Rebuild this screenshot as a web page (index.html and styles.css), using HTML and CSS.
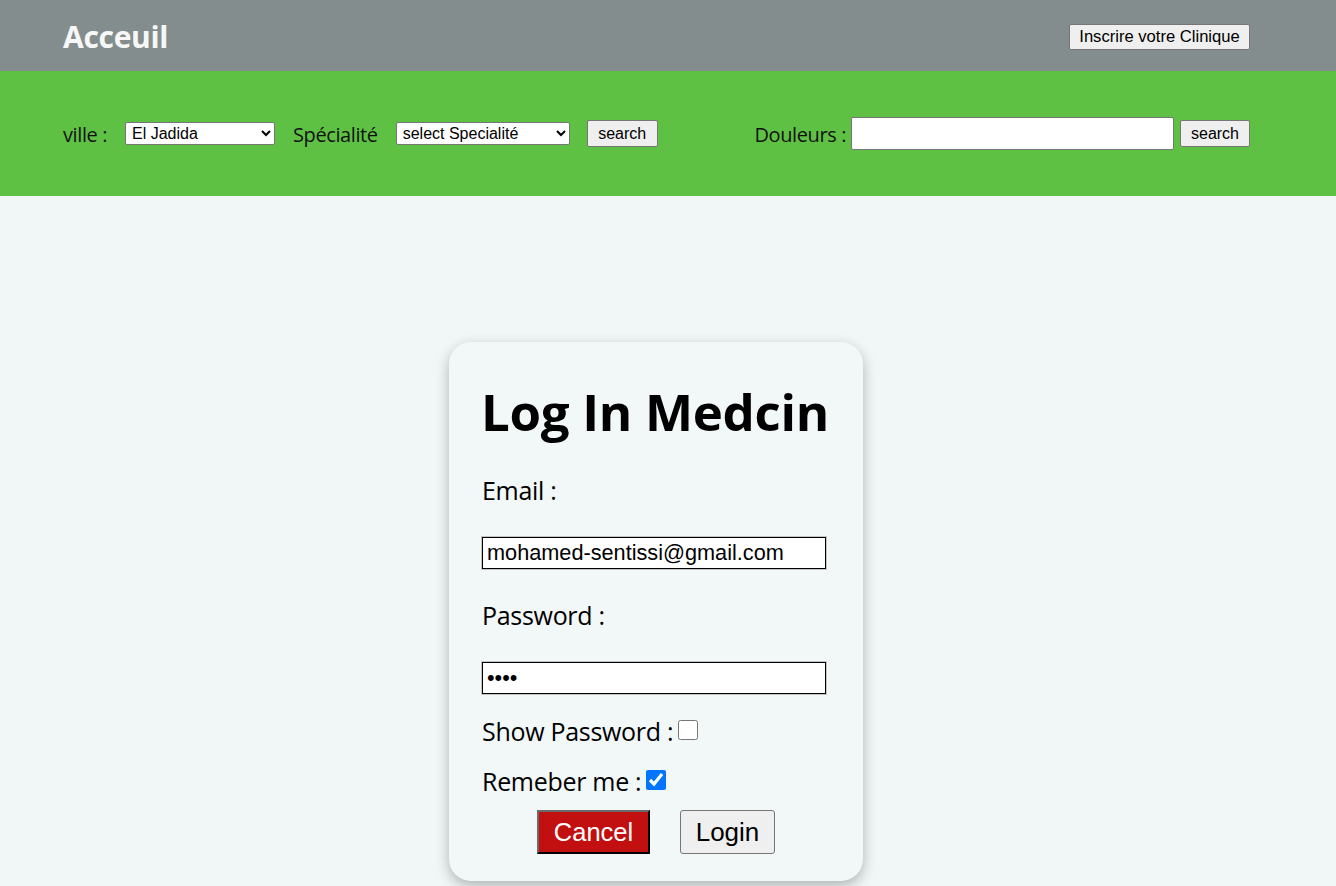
FILE: index.html
```html
<!DOCTYPE html>
<html lang="fr">
<head>
<meta charset="utf-8">
<title>Log In Medcin</title>
<link rel="stylesheet" href="styles.css">
</head>
<body>
<header class="topbar">
  <a class="brand" href="#">Acceuil</a>
  <button class="btn-native btn-clinique" type="button">Inscrire votre Clinique</button>
</header>
<section class="searchbar">
  <form class="search-left">
    <label class="sb-label" for="ville">ville :</label>
    <select id="ville" class="sel sel-ville">
      <option>El Jadida</option>
    </select>
    <label class="sb-label" for="spec">Spécialité</label>
    <select id="spec" class="sel sel-spec">
      <option>select Specialité</option>
    </select>
    <button class="btn-native btn-search" type="button">search</button>
  </form>
  <form class="search-right">
    <label class="sb-label" for="doul">Douleurs :</label>
    <input id="doul" class="doul-input" type="text">
    <button class="btn-native btn-search" type="button">search</button>
  </form>
</section>
<main class="main">
  <form class="card">
    <h1 class="card-title">Log In Medcin</h1>
    <label class="lbl lbl-email" for="email">Email :</label>
    <input id="email" class="field field-email" type="text" value="mohamed-sentissi@gmail.com">
    <label class="lbl lbl-pass" for="pass">Password :</label>
    <input id="pass" class="field field-pass" type="password" value="abcd">
    <div class="check-row row-show">
      <span class="lbl">Show Password :</span>
      <input class="chk" type="checkbox">
    </div>
    <div class="check-row row-remember">
      <span class="lbl">Remeber me :</span>
      <input class="chk" type="checkbox" checked>
    </div>
    <div class="actions">
      <button class="btn-cancel" type="button">Cancel</button>
      <button class="btn-native btn-login" type="button">Login</button>
    </div>
  </form>
</main>
</body>
</html>
```
FILE: styles.css
```css
html, body {
  margin: 0;
  padding: 0;
}
body {
  background: #f1f7f7;
  font-family: "Open Sans", "Noto Sans", sans-serif;
  color: #000;
  min-height: 886px;
}

.topbar {
  height: 71px;
  background: #838d8d;
  display: flex;
  align-items: center;
  justify-content: space-between;
  padding: 0 86px 0 63px;
  box-sizing: border-box;
}
.brand {
  color: #f7f7f7;
  text-decoration: none;
  font-weight: 700;
  font-size: 30px;
  line-height: 40px;
  margin-top: 2px;
  letter-spacing: -0.3px;
}

.btn-native {
  font-family: "Liberation Sans", Arial, sans-serif;
  background: #efefef;
  border: 1px solid #767676;
  border-radius: 2px;
  color: #000;
  padding: 0 8px;
  margin: 0;
}
.btn-clinique {
  font-size: 16.6px;
  height: 26px;
  width: 181px;
  padding: 0;
  margin-top: 2px;
}

.searchbar {
  height: 125px;
  background: #5fc144;
  display: flex;
  align-items: center;
  justify-content: space-between;
  padding: 0 86px 0 63px;
  box-sizing: border-box;
}
.search-left, .search-right {
  display: flex;
  align-items: center;
  margin: 0;
}
.sb-label {
  font-size: 20px;
  line-height: 26px;
  color: #111;
  letter-spacing: -0.4px;
  margin-top: 3px;
}
.sel {
  font-family: "Liberation Sans", Arial, sans-serif;
  font-size: 16px;
  height: 23px;
  border: 1px solid #767676;
  border-radius: 2px;
  background: #fff;
  color: #000;
  padding: 0 0 0 2px;
  margin: 0 18px;
}
.sel-ville { width: 150px; }
.sel-spec { width: 174px; margin-right: 17px; }
.btn-search {
  font-size: 16px;
  height: 27px;
  width: 71px;
  padding: 0;
}
.doul-input {
  width: 323px;
  height: 33px;
  box-sizing: border-box;
  border: 1px solid #767676;
  border-radius: 2px;
  background: #fff;
  margin: 0 6px 0 5px;
  padding: 0 4px;
}
.search-right .btn-search { width: 70px; }

.main {
  display: flex;
  justify-content: center;
  padding-top: 146px;
}
.card {
  width: 414px;
  height: 539px;
  box-sizing: border-box;
  margin-right: 24px;
  background: #f2f7f7;
  border-radius: 22px;
  box-shadow: 0 5px 14px rgba(0, 0, 0, 0.28);
  padding: 36px 33px 0 33px;
  display: flex;
  flex-direction: column;
  align-items: flex-start;
}
.card > * { flex-shrink: 0; }
.card-title {
  margin: 0 0 0 -1px;
  font-size: 51px;
  line-height: 66px;
  font-weight: 700;
  letter-spacing: -0.3px;
  white-space: nowrap;
}
.lbl {
  font-size: 25px;
  line-height: 32px;
  letter-spacing: -0.3px;
  white-space: nowrap;
}
.lbl-email { margin-top: 30px; }
.field {
  width: 344px;
  height: 32px;
  box-sizing: border-box;
  border: 1px solid #000;
  box-shadow: 0 0 0 1px #c4c4c4;
  background: #fff;
  font-family: "Liberation Sans", Arial, sans-serif;
  font-size: 21.7px;
  padding: 0 4px;
  margin: 0;
  color: #000;
}
.field-email { margin-top: 31px; }
.lbl-pass { margin-top: 30px; }
.field-pass { margin-top: 31px; }
.check-row {
  display: flex;
  align-items: center;
}
.row-show { margin-top: 21px; }
.row-remember { margin-top: 18px; }
.chk {
  width: 20px;
  height: 20px;
  margin: -3px 0 0 5px;
}
.actions {
  align-self: stretch;
  display: flex;
  justify-content: center;
  gap: 30px;
  margin-top: 13px;
}
.btn-cancel {
  font-family: "Liberation Sans", Arial, sans-serif;
  font-size: 25.5px;
  height: 44px;
  width: 113px;
  background: #c20f0f;
  color: #fff;
  border: 2px outset #555;
  border-color: #6a6a6a #2a2a2a #2a2a2a #6a6a6a;
  padding: 0;
}
.btn-login {
  font-size: 26px;
  height: 44px;
  width: 95px;
  padding: 0;
  border-radius: 3px;
}
```
